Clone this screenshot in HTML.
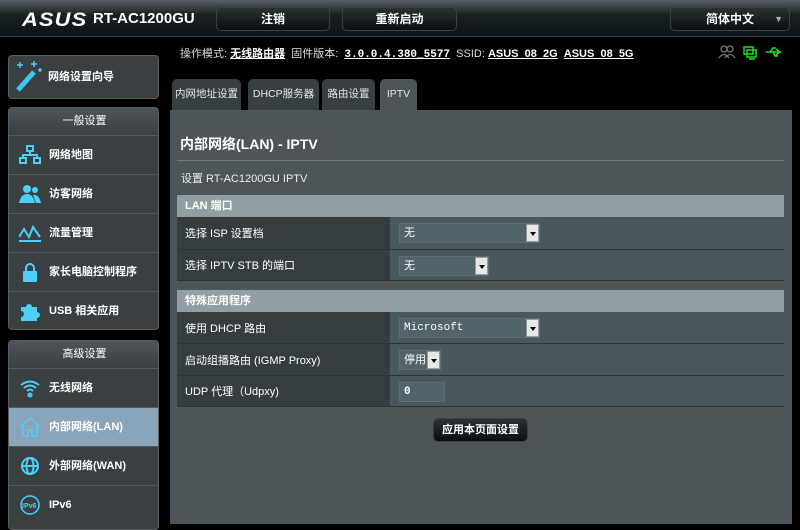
<!DOCTYPE html>
<html><head><meta charset="utf-8"><style>
*{margin:0;padding:0;box-sizing:border-box}
body{width:800px;height:524px;overflow:hidden;background:#000;font-family:"Liberation Sans","Noto Sans CJK SC",sans-serif;color:#fff;position:relative;font-size:11px}
.a{position:absolute}
.hdr{left:0;top:0;width:800px;height:37px;background:linear-gradient(#5a6166,#1b2226 40%,#0c1215);border-bottom:1px solid #3a4146}
.btn{background:linear-gradient(#2a3236,#0a0e10);border:1px solid #3b4246;border-radius:5px;text-align:center;font-weight:bold;font-size:12px;line-height:22px}
.sb{background:#3a3f42;border:1px solid #575c60;border-radius:4px}
.it{position:absolute;left:0;width:151px;height:39px;border-top:1px solid #55595c;font-size:11px;font-weight:bold;line-height:38px;padding-left:40px}
.sh{position:absolute;left:0;top:0;width:151px;height:27px;text-align:center;line-height:27px;font-size:11px;background:linear-gradient(#505559,#3a3f42)}
.ic{position:absolute;left:10px;top:9px;width:22px;height:20px}
.tab{top:79px;height:31px;background:#383f43;border-radius:5px 5px 0 0;line-height:31px;text-align:center;font-size:10.5px;color:#e6e6e6;white-space:nowrap}
.panel{left:170px;top:110px;width:622px;height:414px;background:#4d5559}
.th{left:177px;width:607px;height:22px;background:#919fa4;font-weight:bold;font-size:11px;line-height:22px;padding-left:8px}
.row{left:177px;width:607px;border-bottom:1px solid #2c3336;background:#4a585d}
.row .l{position:absolute;left:0;top:0;bottom:0;width:213px;background:#353d41;padding-left:8px;font-size:11px;display:flex;align-items:center}
.sel{position:absolute;top:6px;height:20px;background:#53636a;border:1px solid #5e6d73;font-size:11px;line-height:18px;padding-left:4px}
.sel b{position:absolute;right:0;top:0;width:13px;height:18px;background:#e8e8e8;border:1px solid #999}
.sel b:after{content:"";position:absolute;left:3px;top:7px;border:3px solid transparent;border-top:4px solid #000}
</style></head><body>
<div class="a hdr"></div>
<div class="a" style="left:22px;top:10px;font:italic bold 19px 'Liberation Sans';letter-spacing:1px;transform:scaleX(1.15);transform-origin:left">ASUS</div>
<div class="a" style="left:93px;top:10px;font-weight:bold;font-size:15px">RT-AC1200GU</div>
<div class="a btn" style="left:216px;top:7px;width:114px;height:24px">注销</div>
<div class="a btn" style="left:342px;top:7px;width:115px;height:24px">重新启动</div>
<div class="a btn" style="left:670px;top:7px;width:120px;height:24px">简体中文 <span style="position:absolute;right:6px;top:0;color:#aaa;font-size:9px">▼</span></div>
<div class="a" style="left:180px;top:45px;font-size:11px;color:#ddd">操作模式: <b style="text-decoration:underline;color:#fff">无线路由器</b> &nbsp;固件版本: &nbsp;<b style="text-decoration:underline;color:#fff;font-family:'Liberation Mono'">3.0.0.4.380_5577</b> &nbsp;SSID: <b style="text-decoration:underline;color:#fff">ASUS_08_2G</b> &nbsp;<b style="text-decoration:underline;color:#fff">ASUS_08_5G</b></div>
<svg class="a" style="left:718px;top:44px" width="70" height="18"><g fill="none" stroke="#777" stroke-width="1.3"><circle cx="6" cy="5" r="3"/><circle cx="12" cy="5" r="3"/><path d="M1 14q5-7 10 0M7 14q5-7 10 0"/></g><g fill="none" stroke="#2d2" stroke-width="1.5"><rect x="26" y="3" width="9" height="7"/><rect x="29" y="6" width="9" height="7"/><path d="M31 15h6"/></g><path d="M48 8h14M58 5l4 3-4 3M52 8l3-4h3M55 8l2 4h3" stroke="#2d2" stroke-width="1.6" fill="none"/></svg>

<div class="a sb" style="left:8px;top:55px;width:151px;height:44px"></div>
<svg class="a" style="left:14px;top:58px" width="30" height="36"><path d="M4 32L20 14" stroke="#3cc8f0" stroke-width="5"/><path d="M6 4v6M3 7h6M20 3v6M17 6h6M26 10v4M24 12h4" stroke="#5cf" stroke-width="1.5"/></svg>
<div class="a" style="left:48px;top:68px;font-weight:bold;font-size:11px">网络设置向导</div>

<div class="a sb" style="left:8px;top:107px;width:151px;height:223px;overflow:hidden">
<div class="sh">一般设置</div>
<div class="it" style="top:27px"><svg class="ic" viewBox="0 0 22 20" fill="none" stroke="#4cd0f8" stroke-width="2"><rect x="8" y="1" width="6" height="5"/><rect x="1" y="13" width="6" height="5"/><rect x="15" y="13" width="6" height="5"/><path d="M11 6v4M4 13v-3h14v3"/></svg>网络地图</div>
<div class="it" style="top:66px"><svg class="ic" viewBox="0 0 22 20" fill="#4cd0f8"><circle cx="8" cy="5" r="4"/><circle cx="16" cy="6" r="3"/><path d="M0 19q2-9 8-9q6 0 8 9zM14 11q6-1 8 8h-5z"/></svg>访客网络</div>
<div class="it" style="top:105px"><svg class="ic" viewBox="0 0 22 20" fill="none" stroke="#4cd0f8" stroke-width="2"><path d="M0 14l5-8 5 8 4-10 7 10M0 18h22"/></svg>流量管理</div>
<div class="it" style="top:144px"><svg class="ic" viewBox="0 0 22 20" fill="#4cd0f8"><path d="M6 9V6a5 5 0 0110 0v3h-2V6a3 3 0 00-6 0v3z"/><rect x="4" y="9" width="14" height="11" rx="1"/></svg>家长电脑控制程序</div>
<div class="it" style="top:183px"><svg class="ic" viewBox="0 0 22 20" fill="#4cd0f8"><path d="M2 6h5a3 3 0 016 0h5v5a3 3 0 010 6v3H2v-4a3 3 0 000-6z"/></svg>USB 相关应用</div>
</div>

<div class="a sb" style="left:8px;top:340px;width:151px;height:190px;overflow:hidden">
<div class="sh">高级设置</div>
<div class="it" style="top:27px"><svg class="ic" viewBox="0 0 22 20" fill="none" stroke="#4cd0f8" stroke-width="2"><path d="M2 7q9-7 18 0M5 10q6-5 12 0M8 13q3-3 6 0"/><circle cx="11" cy="17" r="1.5"/></svg>无线网络</div>
<div class="it" style="top:66px;background:#8aa4bc"><svg class="ic" viewBox="0 0 22 20" fill="none" stroke="#4cd0f8" stroke-width="1.5"><path d="M1 10L11 1l10 9M4 8v11h5v-6h4v6h5V8"/></svg>内部网络(LAN)</div>
<div class="it" style="top:105px"><svg class="ic" viewBox="0 0 22 20" fill="none" stroke="#4cd0f8" stroke-width="2"><circle cx="11" cy="10" r="8"/><ellipse cx="11" cy="10" rx="3.5" ry="8"/><path d="M3 10h16"/></svg>外部网络(WAN)</div>
<div class="it" style="top:144px"><svg class="ic" viewBox="0 0 22 20" fill="none" stroke="#4cd0f8" stroke-width="1.5"><circle cx="11" cy="10" r="9"/><text x="3" y="13" font-size="7" fill="#4cd0f8" stroke="none">IPv6</text></svg>IPv6</div>
</div>

<div class="a tab" style="left:172px;width:69px">内网地址设置</div>
<div class="a tab" style="left:248px;width:71px">DHCP服务器</div>
<div class="a tab" style="left:322px;width:53px">路由设置</div>
<div class="a tab" style="left:380px;width:37px;background:#4d5559">IPTV</div>
<div class="a panel"></div>
<div class="a" style="left:180px;top:134px;font-weight:bold;font-size:14px">内部网络(LAN) - IPTV</div>
<div class="a" style="left:177px;top:160px;width:607px;height:1px;background:#6f7a7f"></div>
<div class="a" style="left:181px;top:170px;font-size:11px;color:#eee">设置 RT-AC1200GU IPTV</div>

<div class="a th" style="top:195px">LAN 端口</div>
<div class="a row" style="top:217px;height:33px"><div class="l">选择 ISP 设置档</div><div class="sel" style="left:222px;width:141px">无<b></b></div></div>
<div class="a row" style="top:250px;height:31px"><div class="l">选择 IPTV STB 的端口</div><div class="sel" style="left:222px;width:90px">无<b></b></div></div>

<div class="a th" style="top:290px">特殊应用程序</div>
<div class="a row" style="top:312px;height:32px"><div class="l">使用 DHCP 路由</div><div class="sel" style="left:222px;width:141px;font-family:'Liberation Mono'">Microsoft<b></b></div></div>
<div class="a row" style="top:344px;height:32px"><div class="l">启动组播路由 (IGMP Proxy)</div><div class="sel" style="left:222px;width:42px">停用<b></b></div></div>
<div class="a row" style="top:376px;height:31px"><div class="l">UDP 代理（Udpxy)</div><div class="sel" style="left:222px;width:46px;font-family:'Liberation Mono';font-weight:bold">0</div></div>

<div class="a btn" style="left:433px;top:418px;width:95px;height:24px;font-size:11px;line-height:22px">应用本页面设置</div>
</body></html>
